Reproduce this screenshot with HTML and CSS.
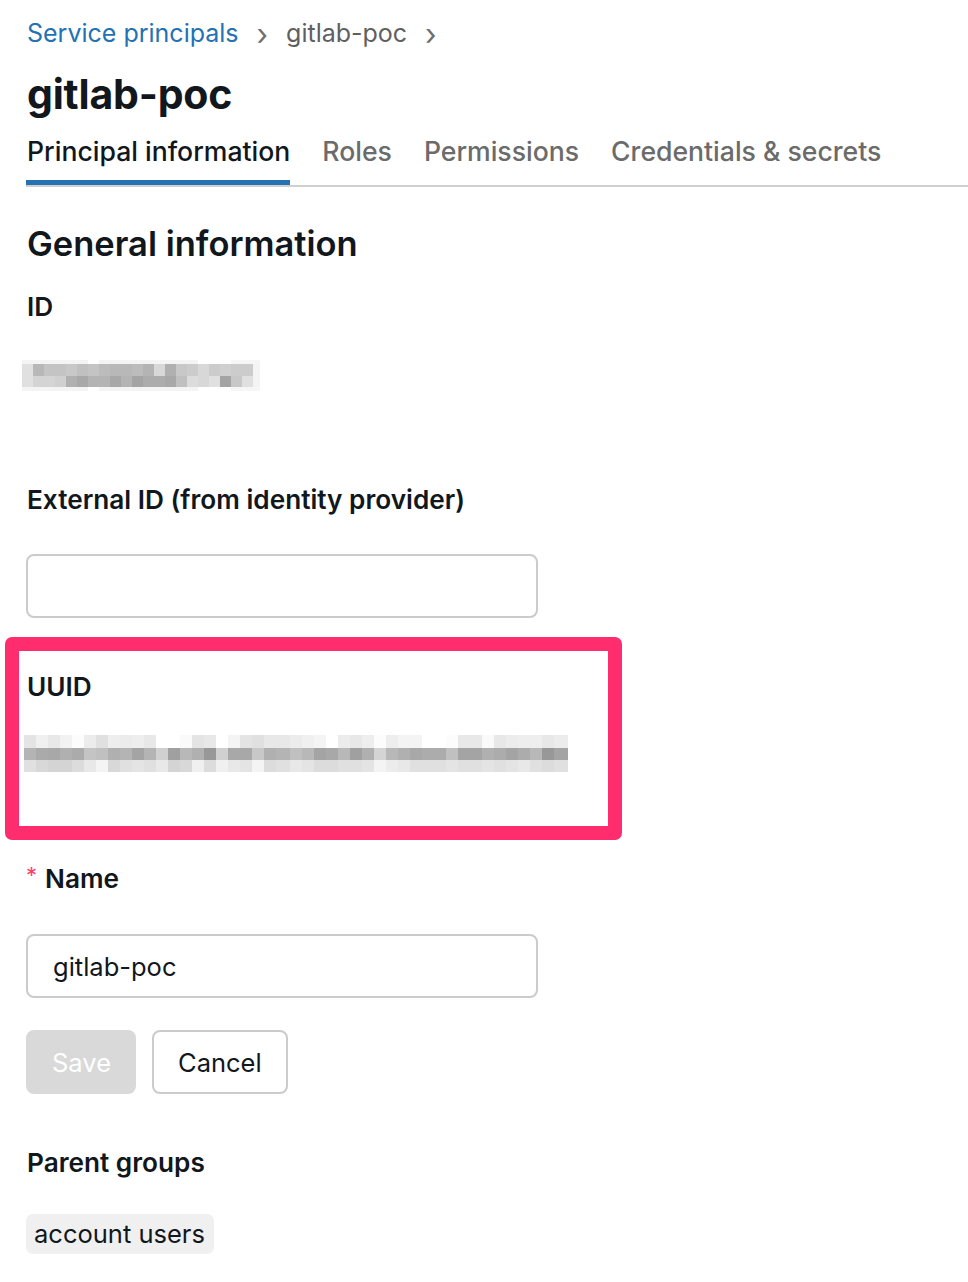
FILE: index.html
```html
<!DOCTYPE html>
<html lang="en">
<head>
    <meta charset="UTF-8">
    <meta name="viewport" content="width=device-width, initial-scale=1.0">
    <title>gitlab-poc</title>
    <link rel="stylesheet" href="styles.css">
</head>
<body>
    <div class="page">
        <nav class="breadcrumb">
            <a href="#">Service principals</a>
            <span class="sep">&rsaquo;</span>
            <span>gitlab-poc</span>
            <span class="sep">&rsaquo;</span>
        </nav>

        <h1 class="title">gitlab-poc</h1>

        <div class="tabs">
            <a href="#" class="tab active">Principal information</a>
            <a href="#" class="tab">Roles</a>
            <a href="#" class="tab">Permissions</a>
            <a href="#" class="tab">Credentials &amp; secrets</a>
        </div>

        <h2 class="section-title">General information</h2>

        <div class="field field-id">
            <div class="label">ID</div>
            <div class="redacted redacted-id"><i class="r0"></i><i class="r1"></i><i class="r2"></i><i class="r3"></i></div>
        </div>

        <div class="field field-external">
            <label class="label" for="externalId">External ID (from identity provider)</label>
            <input type="text" id="externalId" class="text-input">
        </div>

        <div class="field highlight">
            <div class="label">UUID</div>
            <div class="redacted redacted-uuid"><i class="r1"></i><i class="r2"></i><i class="r3"></i></div>
        </div>

        <div class="field field-name">
            <label class="label" for="name"><span class="required">*</span>Name</label>
            <input type="text" id="name" class="text-input" value="gitlab-poc">
        </div>

        <div class="actions">
            <button class="btn btn-save" disabled>Save</button>
            <button class="btn">Cancel</button>
        </div>

        <div class="field field-groups">
            <div class="label">Parent groups</div>
            <span class="tag">account users</span>
        </div>
    </div>
</body>
</html>
```

FILE: styles.css
```css
body {
    font-family: Inter, "Noto Sans", Arial, sans-serif;
    color: #11171c;
    background: #fff;
    margin: 0;
    padding: 0;
}
.page {
    padding: 0 0 0 26px;
}

/* breadcrumb */
.breadcrumb {
    display: flex;
    align-items: center;
    gap: 16px;
    height: 40px;
    padding-top: 13px;
    font-size: 25px;
    color: #5f5f5f;
}
.breadcrumb a {
    color: #2272b4;
    text-decoration: none;
    margin-left: 1px;
}
.breadcrumb .sep {
    font-size: 30px;
    color: #6f6f6f;
    margin: 0 2px -2px;
}

.title {
    margin: 14px 0 0 1px;
    height: 54px;
    line-height: 54px;
    font-size: 41px;
    font-weight: 700;
    letter-spacing: -0.2px;
}

/* tabs */
.tabs {
    display: flex;
    gap: 31px;
    margin-top: 10px;
    border-bottom: 2px solid #cfcfcf;
}
.tab {
    display: block;
    padding: 2px 0 11px 1px;
    line-height: 36px;
    font-size: 26.6px;
    font-weight: 500;
    color: #6b6b6b;
    text-decoration: none;
    border-bottom: 5px solid transparent;
}
.tab.active {
    color: #11171c;
    border-bottom-color: #2272b4;
}

.section-title {
    margin: 33px 0 0 1px;
    line-height: 48px;
    font-size: 34.5px;
    font-weight: 600;
}

.field {
    display: flex;
    flex-direction: column;
    align-items: flex-start;
}
.label {
    display: block;
    margin-left: 1px;
    line-height: 40px;
    font-size: 26.2px;
    font-weight: 600;
}
.field-id {
    margin-top: 19px;
}
.field-external {
    margin-top: 89px;
}
.field-external .label {
    margin-bottom: 34px;
}

.text-input {
    width: 512px;
    height: 64px;
    box-sizing: border-box;
    border: 2px solid #cbcbcb;
    border-radius: 8px;
    padding: 0 25px;
    font-family: inherit;
    font-size: 25.5px;
    color: #11171c;
    background: #fff;
    outline: none;
}

/* pink frame round the UUID */
.highlight {
    margin: 19px 0 0 -21px;
    width: 617px;
    height: 203px;
    box-sizing: border-box;
    border: 14px solid #ff2d6d;
    border-radius: 7px;
    padding: 21px 0 0 7px;
}
.highlight .label {
    line-height: 30px;
}

/* pixelated values */
.redacted {
    display: flex;
    flex-direction: column;
}
.redacted i {
    display: block;
}
.redacted-id {
    margin: 33px 0 0 -4px;
}
.redacted-id .r0,
.redacted-id .r3 {
    height: 4px;
    width: 238px;
    background: linear-gradient(to right, #f4f4f4 0 66px, #fff 0 77px, #f4f4f4 0 176px, #fff 0 209px, #f6f6f6 0 238px);
}
.redacted-id .r1 {
    height: 12px;
    width: 238px;
    background: linear-gradient(to right,
        #e0e0e0 0 11px, #b8b8b8 0 22px, #c4c4c4 0 33px, #c4c4c4 0 44px, #c8c8c8 0 55px,
        #c0c0c0 0 66px, #c4c4c4 0 77px, #bcbcbc 0 88px, #b8b8b8 0 99px, #b8b8b8 0 110px,
        #bcbcbc 0 121px, #b4b4b4 0 132px, #d8d8d8 0 143px, #b0b0b0 0 154px, #c8c8c8 0 165px,
        #cccccc 0 176px, #d8d8d8 0 187px, #cccccc 0 198px, #d0d0d0 0 209px, #cccccc 0 220px,
        #cccccc 0 231px, #f4f4f4 0 238px);
}
.redacted-id .r2 {
    height: 11px;
    width: 238px;
    background: linear-gradient(to right,
        #e0e0e0 0 11px, #d4d4d4 0 22px, #d4d4d4 0 33px, #d0d0d0 0 44px, #b0b0b0 0 55px,
        #a8a8a8 0 66px, #b4b4b4 0 77px, #b4b4b4 0 88px, #a8a8a8 0 99px, #b4b4b4 0 110px,
        #a4a4a4 0 121px, #acacac 0 132px, #acacac 0 143px, #a8a8a8 0 154px, #c0c0c0 0 165px,
        #dcdcdc 0 176px, #d8d8d8 0 187px, #e0e0e0 0 198px, #a4a4a4 0 209px, #c8c8c8 0 220px,
        #e0e0e0 0 231px, #f4f4f4 0 238px);
}

.redacted-uuid {
    margin: 33px 0 0 -2px;
}
.redacted-uuid i {
    width: 544px;
    height: 12px;
}
.redacted-uuid .r1 {
    height: 13px;
    background: linear-gradient(to right,
        #e4e4e4 0 12px, #f0f0f0 0 24px, #e8e8e8 0 36px, #f2f2f2 0 48px, #fcfcfc 0 60px,
        #ececec 0 72px, #e0e0e0 0 84px, #eeeeee 0 96px, #ececec 0 108px, #eeeeee 0 120px,
        #e8e8e8 0 132px, #ffffff 0 144px, #ffffff 0 156px, #fafafa 0 168px, #e4e4e4 0 180px,
        #e8e8e8 0 192px, #ffffff 0 204px, #f4f4f4 0 216px, #e4e4e4 0 228px, #e0e0e0 0 240px,
        #e8e8e8 0 252px, #e8e8e8 0 266px,
        #ececec 0 278px, #f0f0f0 0 290px, #f4f4f4 0 302px, #ffffff 0 314px, #ececec 0 326px,
        #e8e8e8 0 338px, #eeeeee 0 350px, #fcfcfc 0 362px, #eeeeee 0 374px, #f4f4f4 0 386px,
        #f4f4f4 0 398px, #ffffff 0 410px, #ffffff 0 422px, #fcfcfc 0 434px, #e8e8e8 0 446px,
        #e8e8e8 0 458px, #fafafa 0 470px, #e8e8e8 0 482px, #ececec 0 494px, #eeeeee 0 506px,
        #eeeeee 0 518px, #e8e8e8 0 530px, #ececec 0 544px);
}
.redacted-uuid .r2 {
    background: linear-gradient(to right,
        #b4b4b4 0 12px, #aaaaaa 0 24px, #a8a8a8 0 36px, #b0b0b0 0 48px, #ababab 0 60px,
        #c4c4c4 0 72px, #c0c0c0 0 84px, #b0b0b0 0 96px, #b4b4b4 0 108px, #a4a4a4 0 120px,
        #b4b4b4 0 132px, #d0d0d0 0 144px, #a0a0a0 0 156px, #b8b8b8 0 168px, #b0b0b0 0 180px,
        #989898 0 192px, #d0d0d0 0 204px, #a8a8a8 0 216px, #a8a8a8 0 228px, #c8c8c8 0 240px,
        #b0b0b0 0 252px, #b4b4b4 0 266px,
        #c0c0c0 0 278px, #b8b8b8 0 290px, #a4a4a4 0 302px, #a8a8a8 0 314px, #b8b8b8 0 326px,
        #a0a0a0 0 338px, #b0b0b0 0 350px, #d4d4d4 0 362px, #b8b8b8 0 374px, #b0b0b0 0 386px,
        #a8a8a8 0 398px, #acacac 0 410px, #acacac 0 422px, #c0c0c0 0 434px, #a4a4a4 0 446px,
        #a4a4a4 0 458px, #b0b0b0 0 470px, #acacac 0 482px, #a4a4a4 0 494px, #acacac 0 506px,
        #b8b8b8 0 518px, #989898 0 530px, #a4a4a4 0 544px);
}
.redacted-uuid .r3 {
    background: linear-gradient(to right,
        #e0e0e0 0 12px, #d8d8d8 0 24px, #d4d4d4 0 36px, #d4d4d4 0 48px, #dcdcdc 0 60px,
        #e8e8e8 0 72px, #f4f4f4 0 84px, #d8d8d8 0 96px, #e0e0e0 0 108px, #e4e4e4 0 120px,
        #e0e0e0 0 132px, #e8e8e8 0 144px, #d4d4d4 0 156px, #d8d8d8 0 168px, #f0f0f0 0 180px,
        #dcdcdc 0 192px, #f0f0f0 0 204px, #e8e8e8 0 216px, #e4e4e4 0 228px, #f4f4f4 0 240px,
        #dcdcdc 0 252px, #e0e0e0 0 266px,
        #e8e8e8 0 278px, #e4e4e4 0 290px, #dcdcdc 0 302px, #dcdcdc 0 314px, #e0e0e0 0 326px,
        #e0e0e0 0 338px, #e4e4e4 0 350px, #f4f4f4 0 362px, #ececec 0 374px, #e8e8e8 0 386px,
        #e0e0e0 0 398px, #e0e0e0 0 410px, #e0e0e0 0 422px, #e4e4e4 0 434px, #e0e0e0 0 446px,
        #e0e0e0 0 458px, #e4e4e4 0 470px, #e0e0e0 0 482px, #e4e4e4 0 494px, #e8e8e8 0 506px,
        #e0e0e0 0 518px, #dcdcdc 0 530px, #e0e0e0 0 544px);
}

.field-name {
    margin-top: 15px;
}
.field-name .label {
    margin: 0 0 35px 0;
}
.required {
    color: #ff3d6a;
    font-size: 22px;
    font-weight: 400;
    margin-right: 8px;
    vertical-align: 5px;
}

/* buttons */
.actions {
    display: flex;
    gap: 16px;
    margin-top: 32px;
}
.btn {
    height: 64px;
    padding: 0 24px;
    border: 2px solid #cbcbcb;
    border-radius: 8px;
    background: #fff;
    color: #11171c;
    font-family: inherit;
    font-size: 25.5px;
    cursor: pointer;
}
.btn-save {
    width: 110px;
    border-color: #d9d9d9;
    background: #d9d9d9;
    color: #fff;
    cursor: default;
}

.field-groups {
    margin-top: 49px;
}
.tag {
    margin-top: 31px;
    padding: 0 9px 0 8px;
    height: 40px;
    line-height: 40px;
    font-size: 25.5px;
    background: #f0f0f0;
    border-radius: 7px;
}
```
